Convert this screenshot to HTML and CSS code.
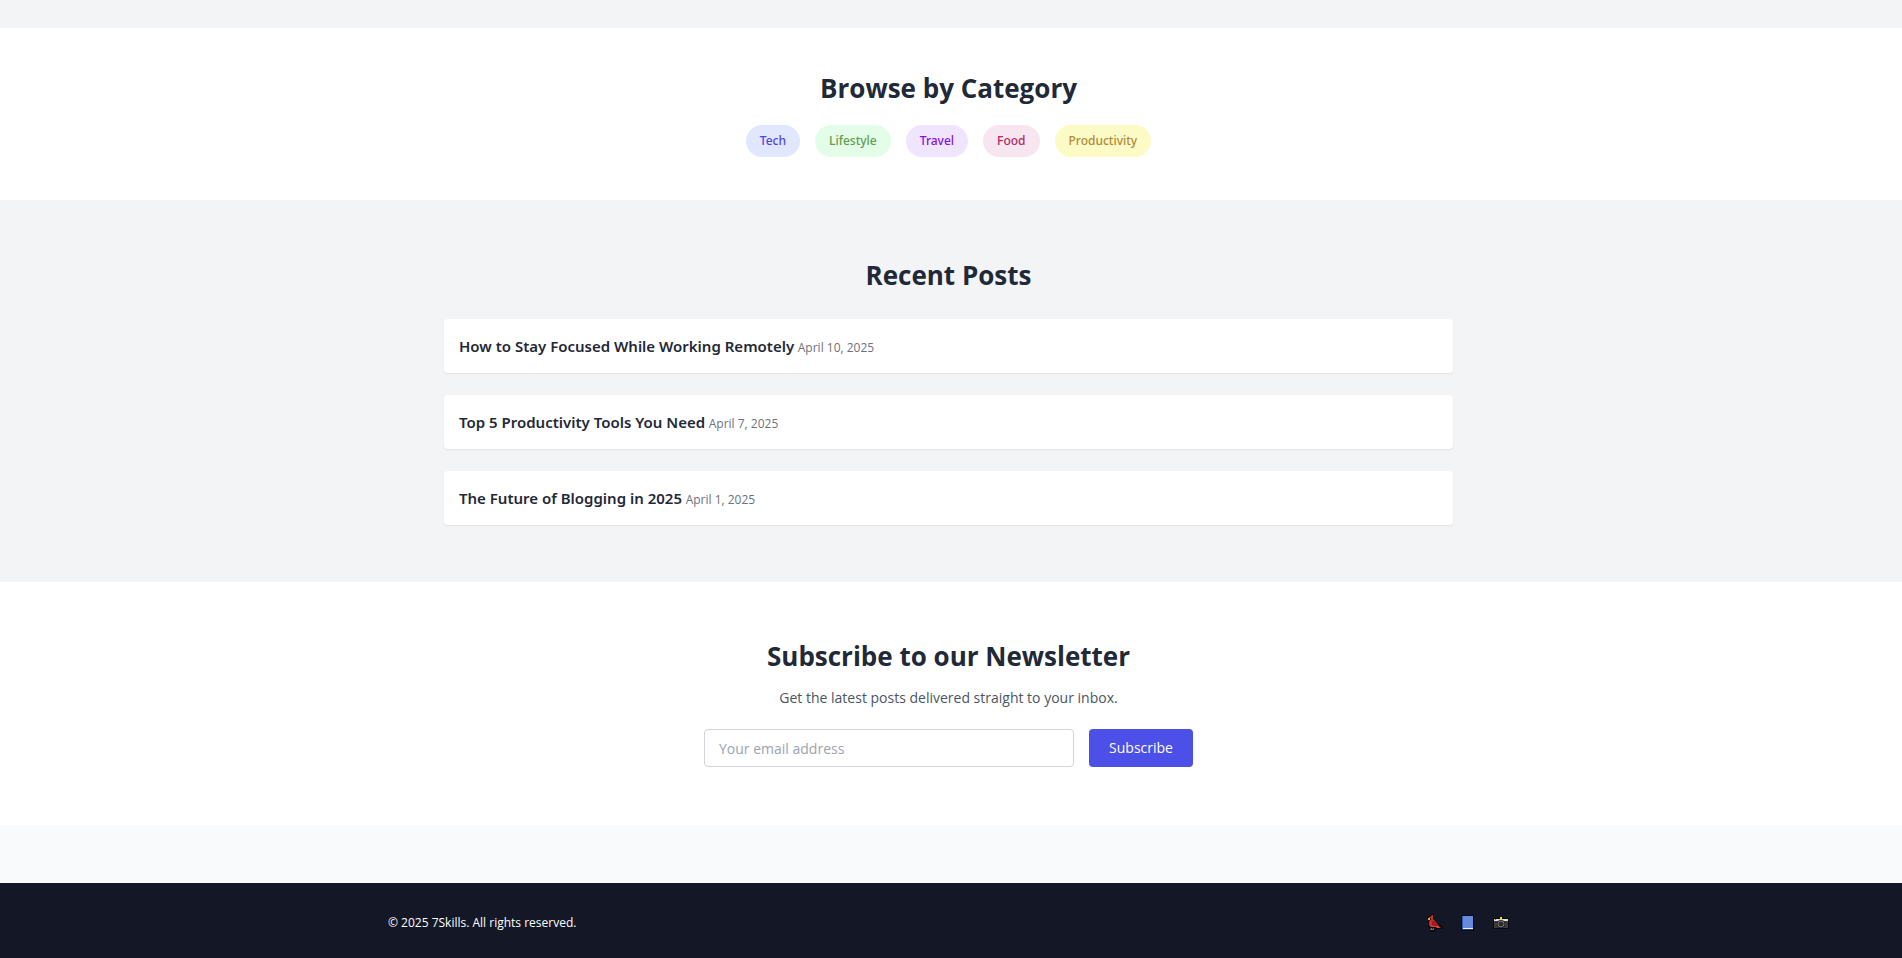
FILE: index.html
```html
<!DOCTYPE html>
<html lang="en">
<head>
<meta charset="utf-8">
<meta name="viewport" content="width=device-width, initial-scale=1">
<title>7Skills Blog</title>
<link rel="stylesheet" href="styles.css">
</head>
<body>
<main>
  <div class="spacer"></div>
  <section class="categories">
    <h2>Browse by Category</h2>
    <div class="pills">
      <a class="pill tech" href="#tech">Tech</a>
      <a class="pill lifestyle" href="#lifestyle">Lifestyle</a>
      <a class="pill travel" href="#travel">Travel</a>
      <a class="pill food" href="#food">Food</a>
      <a class="pill productivity" href="#productivity">Productivity</a>
    </div>
  </section>
  <section class="recent">
    <h2>Recent Posts</h2>
    <ul class="posts">
      <li class="post"><a href="#focus">How to Stay Focused While Working Remotely</a> <time datetime="2025-04-10">April 10, 2025</time></li>
      <li class="post"><a href="#tools">Top 5 Productivity Tools You Need</a> <time datetime="2025-04-07">April 7, 2025</time></li>
      <li class="post"><a href="#future">The Future of Blogging in 2025</a> <time datetime="2025-04-01">April 1, 2025</time></li>
    </ul>
  </section>
  <section class="newsletter">
    <h2>Subscribe to our Newsletter</h2>
    <p>Get the latest posts delivered straight to your inbox.</p>
    <form class="signup">
      <input type="email" placeholder="Your email address" aria-label="Your email address">
      <button type="submit">Subscribe</button>
    </form>
  </section>
</main>
<footer class="footer">
  <div class="footer-inner">
    <p>© 2025 7Skills. All rights reserved.</p>
    <nav class="social">
      <a href="#bird" aria-label="Bird">
        <svg viewBox="0 0 16 18" width="16" height="18">
          <path d="M2 2l3-2h2v5l3 3 3 3 3 2v2h-5l-3 1v2H3v-2l1-1-3-2V8l1-2H1V3z" fill="#08090f"/>
          <path d="M3 3l2-2h1v4l3 3 3 4-1 1H5l-3-2V8l1-2H2V3z" fill="#c72f27"/>
          <path d="M5 7h2l4 4v2H8l-3-2z" fill="#9c1c21"/>
          <path d="M2 11l3 1h6l3 2h-4l-1-1H4z" fill="#e0472e"/>
          <path d="M1 4h2v2H1z" fill="#eba63a"/>
          <path d="M3 4h1v2H3z" fill="#18191e"/>
          <path d="M4 14h1v2H4zM6 14h1v2H6zM3 15h4v1H3z" fill="#77726f"/>
        </svg>
      </a>
      <a href="#book" aria-label="Book">
        <svg viewBox="0 0 16 18" width="16" height="18">
          <path d="M1 1h13v16H1z" fill="#080b17"/>
          <path d="M2 2h11v12H2z" fill="#668bd8"/>
          <path d="M2 2h1v13H2z" fill="#3159b3"/>
          <path d="M3 14h10v1H3z" fill="#edf1f5"/>
          <path d="M2 15h11v1H2z" fill="#203c7c"/>
        </svg>
      </a>
      <a href="#camera" aria-label="Camera">
        <svg viewBox="0 0 16 18" width="16" height="18">
          <path d="M0 4h5l1-1h4l1 1h5v11H0z" fill="#090a0f"/>
          <path d="M1 7h14v7H1z" fill="#3c3a3b"/>
          <path d="M1 5h14v2H1z" fill="#deded9"/>
          <path d="M2 5h1v1H2z" fill="#c74433"/>
          <circle cx="8" cy="10" r="4" fill="#17191e"/>
          <circle cx="8" cy="10" r="3" fill="#292b2e" stroke="#77787a"/>
          <path d="M6 5h1V3h2v2h1v1H6z" fill="#f1d541"/>
        </svg>
      </a>
    </nav>
  </div>
</footer>
</body>
</html>
```
FILE: styles.css
```css
* {
  box-sizing: border-box;
}

body {
  margin: 0;
  min-height: 100vh;
  background: #f9fafb;
  color: #1f2937;
  font-family: "Segoe UI", "Open Sans", "Noto Sans", sans-serif;
  font-size: 14px;
  line-height: 22px;
}

h2, p, ul {
  margin: 0;
  padding: 0;
}

h2 {
  font-size: 26px;
  line-height: 32px;
  font-weight: 700;
  text-align: center;
}

a {
  color: inherit;
  text-decoration: none;
}

main {
  margin-bottom: 58px;
}

.spacer {
  height: 28px;
  background: #f3f4f6;
}

section {
  display: flex;
  flex-direction: column;
  align-items: center;
  padding: 58px 21px 58px 16px;
}

.categories {
  padding-top: 44px;
  padding-bottom: 43px;
  gap: 21px;
  background: #fff;
}

.pills {
  display: flex;
  flex-wrap: wrap;
  justify-content: center;
  gap: 15px;
}

.pill {
  padding: 5px 14px;
  border-radius: 16px;
  font-family: "Segoe UI", "Noto Sans", sans-serif;
  font-size: 12px;
  font-weight: 500;
}

.tech { background: #e0e7ff; color: #4f46e5; }
.lifestyle { background: #e4fde8; color: #5c9e50; }
.travel { background: #f0e5ff; color: #8510e0; }
.food { background: #f7e5f0; color: #b32769; }
.productivity { background: #fdfbc5; color: #b08b35; }

.recent {
  gap: 28px;
  background: #f3f4f6;
  padding-top: 59px;
  padding-bottom: 57px;
}

.posts {
  display: flex;
  flex-direction: column;
  gap: 22px;
  width: 100%;
  max-width: 1009px;
  list-style: none;
}

.post {
  padding: 16px 15px 14px;
  border-radius: 4px;
  background: #fff;
  box-shadow: 0 1px 2px rgba(0, 0, 0, 0.07);
  line-height: 24px;
}

.post a {
  font-family: "Segoe UI", "Noto Sans", sans-serif;
  font-size: 15px;
  line-height: 20px;
  font-weight: 600;
}

.post time {
  font-size: 12px;
  line-height: 20px;
  color: #6b7280;
}

.newsletter {
  background: #fff;
}

.newsletter p {
  margin-top: 15px;
  color: #4b5563;
}

.signup {
  display: flex;
  gap: 15px;
  width: 100%;
  max-width: 489px;
  margin-top: 20px;
}

.signup input {
  flex: 1;
  min-width: 0;
  height: 38px;
  padding: 0 14px;
  border: 1px solid #d1d5db;
  border-radius: 4px;
  font: inherit;
}

.signup input::placeholder {
  color: #9ca3af;
}

.signup button {
  width: 104px;
  border: 0;
  border-radius: 4px;
  background: #4d50e6;
  color: #fff;
  font: inherit;
}

.footer {
  padding: 29px 21px 24px 16px;
  background: #141826;
  color: #fff;
  font-size: 12px;
}

.footer-inner {
  display: flex;
  align-items: center;
  justify-content: space-between;
  max-width: 1121px;
  margin: 0 auto;
}

.social {
  display: flex;
  gap: 17px;
}

.social a {
  display: flex;
}
```
